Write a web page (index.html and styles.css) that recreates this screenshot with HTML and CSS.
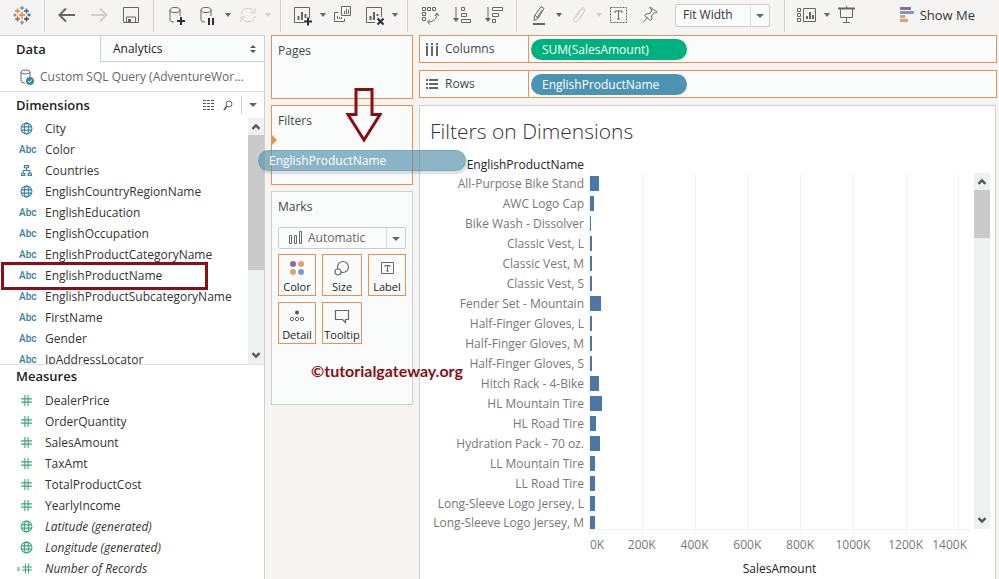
FILE: index.html
```html
<!DOCTYPE html>
<html lang="en">
<head>
    <meta charset="UTF-8">
    <meta name="viewport" content="width=device-width, initial-scale=1.0">
    <title>Filters on Dimensions</title>
    <link rel="stylesheet" href="styles.css">
</head>
<body>
    <!-- shared icons -->
    <svg class="sprite" aria-hidden="true">
        <symbol id="globe" viewBox="0 0 12 12">
            <g fill="none" stroke="currentColor">
                <circle cx="6" cy="6" r="5"/>
                <ellipse cx="6" cy="6" rx="2" ry="5"/>
                <path d="M1.5 4.5h9M1.5 7.5h9"/>
            </g>
        </symbol>
        <symbol id="hierarchy" viewBox="0 0 12 12">
            <path d="M4 1.5h4v2H4zM1.5 8.500h3v2h-3zM7.500 8.500h3v2h-3zM6 3.500v2.500M3 8.500v-2.500h6v2.500" fill="none" stroke="currentColor"/>
        </symbol>
        <symbol id="hash" viewBox="0 0 12 12">
            <path d="M4.500 1v10M7.500 1v10M1 4.500h10M1 7.500h10" fill="none" stroke="currentColor"/>
        </symbol>
        <symbol id="calc-hash" viewBox="0 0 16 12">
            <path d="M8.500 1v10M11.500 1v10M5 4.500h10M5 7.500h10M0 5.500h3M0 7.500h3" fill="none" stroke="currentColor"/>
        </symbol>
        <symbol id="up" viewBox="0 0 8 6">
            <path d="M1 5l3-3 3 3" fill="none" stroke="currentColor" stroke-width="2"/>
        </symbol>
        <symbol id="down" viewBox="0 0 8 6">
            <path d="M1 1l3 3 3-3" fill="none" stroke="currentColor" stroke-width="2"/>
        </symbol>
    </svg>

    <header class="toolbar">
        <div class="group">
            <button class="logo" aria-label="Start page">
                <svg width="20" height="20" viewBox="0 0 20 20" fill="none" stroke-width="1.4">
                    <path d="M10 6.500v7M6.500 10h7" stroke="#e08a3c"/>
                    <path d="M5.500 3.500v5M3 6h5" stroke="#e08a3c"/>
                    <path d="M14.500 3.500v5M12 6h5" stroke="#4a6ca8"/>
                    <path d="M5.500 11.500v5M3 14h5" stroke="#c9582f"/>
                    <path d="M14.500 11.500v5M12 14h5" stroke="#5a3a50"/>
                    <path d="M10 1v4M8 3h4" stroke="#5fa3a0"/>
                    <path d="M10 15.500v4M8 17.500h4" stroke="#7c93b8"/>
                    <path d="M3 8.500v3M1.500 10h3" stroke="#5b93b5"/>
                    <path d="M17 8.500v3M15.500 10h3" stroke="#3d62a8"/>
                </svg>
            </button>
        </div>
        <div class="group">
            <button class="tool" aria-label="Back"><svg viewBox="0 0 20 20"><path d="M18 10H3M9 3.500L2.500 10l6.500 6.500" stroke-width="2"/></svg></button>
            <button class="tool off" aria-label="Forward"><svg viewBox="0 0 20 20"><path d="M2 10h15M11 3.500l6.500 6.500-6.500 6.500" stroke-width="2"/></svg></button>
            <button class="tool" aria-label="Save"><svg viewBox="0 0 20 20"><path d="M2.500 2.500h15v15h-15zM5.500 17v-5h9v5"/><path class="solid" d="M7 14h3v3H7z"/></svg></button>
        </div>
        <div class="group carets">
            <button class="tool" aria-label="New data source"><svg viewBox="0 0 20 20"><ellipse cx="9" cy="5" rx="5" ry="2.500"/><path d="M4 5v10c0 1 1 2 4 2M14 5v6"/><path class="dark" d="M15 12v8M11 16h8"/></svg></button>
            <button class="tool" aria-label="Pause auto updates"><svg viewBox="0 0 20 20"><ellipse cx="8" cy="5" rx="5" ry="2.500"/><path d="M3 5v10c0 1 1 2 4 2M13 5v6"/><path class="dark" d="M11 13v7M15 13v7"/></svg></button>
            <button class="caret" aria-label="Update options"></button>
            <button class="tool off" aria-label="Refresh"><svg viewBox="0 0 20 20"><path d="M3 9a7 7 0 0 1 13-2M17 11a7 7 0 0 1-13 2M17 3v5h-5M3 17v-5h5"/></svg></button>
            <button class="caret off" aria-label="Refresh options"></button>
        </div>
        <div class="group carets">
            <button class="tool" aria-label="New worksheet"><svg viewBox="0 0 20 20"><path d="M11 17.500H1.500v-15h15V13"/><path d="M5.500 15v-4M9 15V7M12.500 13V9" stroke-width="2"/><path class="dark" d="M15 12.500v8M11 16.500h8"/></svg></button>
            <button class="caret" aria-label="Worksheet options"></button>
            <button class="tool" aria-label="Duplicate"><svg viewBox="0 0 20 20"><path d="M8.500 1.500h9v9h-9zM5.500 7.500h-4v9h10v-3M11.500 9V6M13.500 9V3.500M15.500 9V5M4.500 14v-3M6.500 14v-2M8.500 14v-2"/></svg></button>
            <button class="tool" aria-label="Clear sheet"><svg viewBox="0 0 20 20"><path d="M10 17.500H1.500v-15h15V12"/><path d="M5.500 15v-4M9 15V7M12.500 11V9" stroke-width="2"/><path class="dark" d="M12.500 13.500l6 6M18.500 13.500l-6 6"/></svg></button>
            <button class="caret" aria-label="Clear options"></button>
        </div>
        <div class="group">
            <button class="tool" aria-label="Swap rows and columns"><svg viewBox="0 0 20 20"><path d="M2.500 2.500h3v3h-3zM7.500 2.500h3v3h-3zM12.500 2.500h3v3h-3zM2.500 7.500h3v3h-3zM2.500 12.500h3v3h-3zM8 17c6 0 9-4 9-8M15 11l2-3 2 3M10 14.500L7.500 17l2.500 2.500"/></svg></button>
            <button class="tool" aria-label="Sort ascending"><svg viewBox="0 0 20 20"><path d="M4 2v13"/><path class="solid" d="M1 13h6l-3 4z"/><path d="M9.500 2.500h3v3h-3zM9.500 8.500h5v3h-5zM9.500 14.500h9v3h-9z"/></svg></button>
            <button class="tool" aria-label="Sort descending"><svg viewBox="0 0 20 20"><path d="M4 2v13"/><path class="solid" d="M1 13h6l-3 4z"/><path d="M8.500 2.500h10v3h-10zM8.500 8.500h6v3h-6zM8.500 14.500h3v3h-3z"/></svg></button>
        </div>
        <div class="group">
            <button class="tool" aria-label="Highlight"><svg viewBox="0 0 20 20"><path d="M12 1.500l3 2-6 10-4 2 .5-4.500zM6 10.500l3 2M13 5l-5 8"/><path d="M4 19h12" stroke-width="2"/></svg></button>
            <button class="caret" aria-label="Highlight options"></button>
            <button class="tool off" aria-label="Group members"><svg viewBox="0 0 20 20"><path d="M7 12l5-7c2-2 4-.5 3 1.500l-6 9c-2 3-6 1-4-2l6-9c2-3 6-2 4.500 2l-4 6"/></svg></button>
            <button class="caret off" aria-label="Group options"></button>
            <button class="tool" aria-label="Show mark labels"><svg viewBox="0 0 20 20"><path d="M1.500 2.500h16v15h-16z" stroke-dasharray="2 1"/><path d="M6 8V6h7v2M9.500 6v8M8 14h3"/></svg></button>
            <button class="tool" aria-label="Fix axes"><svg viewBox="0 0 20 20"><path d="M9 2l7 5-1.500 1-1-.5-3 3.500.5 3-1.500 1.500-6-5L5 9l3.500-.5L11 5l-2-1.500zM6.500 12.500L2 17.500"/></svg></button>
            <div class="select fit">
                <select aria-label="Fit"><option>Fit Width</option></select>
            </div>
        </div>
        <div class="group last">
            <button class="tool" aria-label="Show cards"><svg viewBox="0 0 20 20"><path d="M.5 3.500h3v3h-3zM.5 8.500h3v3h-3zM.5 13.500h3v3h-3zM6.500 3.500h12v13h-12z"/><path d="M10 14v-3M13 14V7M16 14v-4" stroke-width="2"/></svg></button>
            <button class="caret" aria-label="Card options"></button>
            <button class="tool" aria-label="Presentation mode"><svg viewBox="0 0 20 20"><path d="M1 3.500h17" stroke-width="2"/><path d="M3.500 4v8.500h12V4M9.500 13v4M6 17.500h7M9.500 1v2"/></svg></button>
        </div>
        <button class="show-me">
            <svg width="14" height="15" viewBox="0 0 14 15">
                <path fill="#8d6c9b" d="M0 0h11v3H0z"/>
                <path fill="#8097c9" d="M0 4h14v3H0z"/>
                <path fill="#e3a06a" d="M0 8h5v3H0zM0 12h8v3H0z"/>
            </svg>
            Show Me
        </button>
    </header>

    <main class="workspace">
        <aside class="pane">
            <div class="tabs">
                <button class="tab active">Data</button>
                <button class="tab">Analytics
                    <svg width="6" height="8" viewBox="0 0 6 8"><path fill="#555" d="M3 0l3 3H0zM3 8L0 5h6z"/></svg>
                </button>
            </div>
            <a class="source" href="#">
                <svg width="14" height="16" viewBox="0 0 14 16">
                    <g fill="none" stroke="#666"><ellipse cx="5.500" cy="3" rx="4.500" ry="2"/><path d="M1 3v9c0 1 1 2 4 2M10 3v5"/></g>
                    <circle cx="10" cy="12" r="4" fill="#2f87ab"/><path d="M8 12l1.500 1.500 2.500-3" fill="none" stroke="#fff"/>
                </svg>
                Custom SQL Query (AdventureWor...
            </a>
            <section class="dimensions">
                <div class="pane-head">
                    <h2>Dimensions</h2>
                    <button aria-label="View data"><svg width="12" height="10" viewBox="0 0 12 10"><path d="M0 .5h12M0 3.500h12M0 6.500h12M0 9.500h12" stroke="#555" stroke-dasharray="3 1"/></svg></button>
                    <button aria-label="Find field"><svg width="10" height="11" viewBox="0 0 10 11"><path d="M4 6L1 10" stroke="#666" stroke-width="2"/><circle cx="6" cy="4" r="3" fill="none" stroke="#666"/></svg></button>
                    <button class="menu" aria-label="Dimensions menu"><span class="arrow"></span></button>
                </div>
                <div class="scroll-area">
                    <ul class="fields">
                        <li><svg class="icon"><use href="#globe"/></svg>City</li>
                        <li><span class="abc">Abc</span>Color</li>
                        <li><svg class="icon"><use href="#hierarchy"/></svg>Countries</li>
                        <li><svg class="icon"><use href="#globe"/></svg>EnglishCountryRegionName</li>
                        <li><span class="abc">Abc</span>EnglishEducation</li>
                        <li><span class="abc">Abc</span>EnglishOccupation</li>
                        <li><span class="abc">Abc</span>EnglishProductCategoryName</li>
                        <li class="marked"><span class="abc">Abc</span>EnglishProductName</li>
                        <li><span class="abc">Abc</span>EnglishProductSubcategoryName</li>
                        <li><span class="abc">Abc</span>FirstName</li>
                        <li><span class="abc">Abc</span>Gender</li>
                        <li><span class="abc">Abc</span>IpAddressLocator</li>
                    </ul>
                    <div class="scrollbar">
                        <svg><use href="#up"/></svg>
                        <div class="thumb"></div>
                        <svg><use href="#down"/></svg>
                    </div>
                </div>
            </section>
            <section class="measures">
                <h2>Measures</h2>
                <ul class="fields">
                    <li><svg class="icon"><use href="#hash"/></svg>DealerPrice</li>
                    <li><svg class="icon"><use href="#hash"/></svg>OrderQuantity</li>
                    <li><svg class="icon"><use href="#hash"/></svg>SalesAmount</li>
                    <li><svg class="icon"><use href="#hash"/></svg>TaxAmt</li>
                    <li><svg class="icon"><use href="#hash"/></svg>TotalProductCost</li>
                    <li><svg class="icon"><use href="#hash"/></svg>YearlyIncome</li>
                    <li class="generated"><svg class="icon"><use href="#globe"/></svg>Latitude (generated)</li>
                    <li class="generated"><svg class="icon"><use href="#globe"/></svg>Longitude (generated)</li>
                    <li class="generated"><svg class="icon wide"><use href="#calc-hash"/></svg>Number of Records</li>
                </ul>
            </section>
        </aside>

        <div class="cards">
            <section class="card pages">
                <h3>Pages</h3>
            </section>
            <section class="card filters">
                <h3>Filters</h3>
                <span class="drop-mark"></span>
                <div class="drag-pill">EnglishProductName</div>
                <svg class="arrow-down" width="36" height="56" viewBox="0 0 36 56"><path d="M10 2.500h16v25h8L18 53 2 27.500h8z" fill="none" stroke="#8a0f14" stroke-width="3"/></svg>
            </section>
            <section class="card marks">
                <h3>Marks</h3>
                <div class="select mark-type">
                    <svg width="14" height="13" viewBox="0 0 14 13"><path d="M.5 4.500h2v8h-2zM5.500 4.500h2v8h-2zM10.500.5h2v12h-2z" fill="none" stroke="#666"/></svg>
                    <select aria-label="Mark type"><option>Automatic</option></select>
                </div>
                <div class="mark-buttons">
                    <button>
                        <svg viewBox="0 0 16 16"><circle cx="4" cy="4" r="3" fill="#8d6c9b"/><circle cx="12" cy="4" r="3" fill="#e3a06a"/><circle cx="4" cy="12" r="3" fill="#e3a06a"/><circle cx="12" cy="12" r="3" fill="#7d9bd0"/></svg>
                        Color
                    </button>
                    <button>
                        <svg viewBox="0 0 16 16"><g fill="#fafcfb" stroke="#666" stroke-width="1.200"><circle cx="9" cy="7" r="5.500"/><circle cx="4" cy="12" r="3"/></g></svg>
                        Size
                    </button>
                    <button>
                        <svg viewBox="0 0 16 16"><path d="M2.500 2.500h12v11h-12zM6 7V5.500h5V7M8.500 5.500v5.500M7 11h3" fill="none" stroke="#666"/></svg>
                        Label
                    </button>
                    <button>
                        <svg viewBox="0 0 16 16"><circle cx="8" cy="4.500" r="2" fill="#555"/><g fill="none" stroke="#666"><circle cx="3" cy="11" r="1.700"/><circle cx="8" cy="11" r="1.700"/><circle cx="13" cy="11" r="1.700"/></g></svg>
                        Detail
                    </button>
                    <button>
                        <svg viewBox="0 0 16 16"><path d="M1.500 2.500h13v9h-3v3l-3-3h-7z" fill="none" stroke="#666" stroke-width="1.200"/></svg>
                        Tooltip
                    </button>
                </div>
                <div class="watermark">©tutorialgateway.org</div>
            </section>
        </div>

        <div class="sheet">
            <div class="shelf">
                <div class="shelf-name">
                    <svg width="12" height="13" viewBox="0 0 12 13"><path d="M1 0v2M1 3v10M6 0v2M6 3v10M11 0v2M11 3v10" stroke="#666" stroke-width="2"/></svg>
                    Columns
                </div>
                <button class="pill green">SUM(SalesAmount)</button>
            </div>
            <div class="shelf">
                <div class="shelf-name">
                    <svg width="12" height="13" viewBox="0 0 12 13"><path d="M0 2h2M3 2h9M0 6h2M3 6h9M0 10h2M3 10h9" stroke="#666" stroke-width="2"/></svg>
                    Rows
                </div>
                <button class="pill blue">EnglishProductName</button>
            </div>
            <section class="canvas">
                <h1>Filters on Dimensions</h1>
                <div class="chart">
                    <div class="field-name">EnglishProductName</div>
                    <div class="grid-lines"><i></i><i></i><i></i><i></i><i></i><i></i><i></i><i></i></div>
                    <div class="rows">
                        <div class="row"><span>All-Purpose Bike Stand</span><div class="track"><div class="bar" style="--sales: 34"></div></div></div>
                        <div class="row"><span>AWC Logo Cap</span><div class="track"><div class="bar" style="--sales: 16"></div></div></div>
                        <div class="row"><span>Bike Wash - Dissolver</span><div class="track"><div class="bar" style="--sales: 4"></div></div></div>
                        <div class="row"><span>Classic Vest, L</span><div class="track"><div class="bar" style="--sales: 8"></div></div></div>
                        <div class="row"><span>Classic Vest, M</span><div class="track"><div class="bar" style="--sales: 8"></div></div></div>
                        <div class="row"><span>Classic Vest, S</span><div class="track"><div class="bar" style="--sales: 8"></div></div></div>
                        <div class="row"><span>Fender Set - Mountain</span><div class="track"><div class="bar" style="--sales: 42"></div></div></div>
                        <div class="row"><span>Half-Finger Gloves, L</span><div class="track"><div class="bar" style="--sales: 8"></div></div></div>
                        <div class="row"><span>Half-Finger Gloves, M</span><div class="track"><div class="bar" style="--sales: 8"></div></div></div>
                        <div class="row"><span>Half-Finger Gloves, S</span><div class="track"><div class="bar" style="--sales: 8"></div></div></div>
                        <div class="row"><span>Hitch Rack - 4-Bike</span><div class="track"><div class="bar" style="--sales: 35"></div></div></div>
                        <div class="row"><span>HL Mountain Tire</span><div class="track"><div class="bar" style="--sales: 46"></div></div></div>
                        <div class="row"><span>HL Road Tire</span><div class="track"><div class="bar" style="--sales: 23"></div></div></div>
                        <div class="row"><span>Hydration Pack - 70 oz.</span><div class="track"><div class="bar" style="--sales: 38"></div></div></div>
                        <div class="row"><span>LL Mountain Tire</span><div class="track"><div class="bar" style="--sales: 19"></div></div></div>
                        <div class="row"><span>LL Road Tire</span><div class="track"><div class="bar" style="--sales: 19"></div></div></div>
                        <div class="row"><span>Long-Sleeve Logo Jersey, L</span><div class="track"><div class="bar" style="--sales: 19"></div></div></div>
                        <div class="row"><span>Long-Sleeve Logo Jersey, M</span><div class="track"><div class="bar" style="--sales: 19"></div></div></div>
                    </div>
                    <div class="scrollbar">
                        <svg><use href="#up"/></svg>
                        <div class="thumb"></div>
                        <svg><use href="#down"/></svg>
                    </div>
                    <div class="axis">
                        <span>0K</span><span>200K</span><span>400K</span><span>600K</span><span>800K</span><span>1000K</span><span>1200K</span><span>1400K</span>
                    </div>
                    <div class="axis-title">SalesAmount</div>
                </div>
            </section>
        </div>
    </main>
</body>
</html>
```
FILE: styles.css
```css
*, *::before, *::after { box-sizing: border-box; }
body {
    margin: 0;
    height: 100vh;
    display: flex;
    flex-direction: column;
    overflow: hidden;
    background: #f5f4f3;
    color: #333;
    font: 12px/20px "Open Sans", "Noto Sans", sans-serif;
}
h1, h2, h3, ul { margin: 0; padding: 0; }
button { padding: 0; border: none; background: none; font: inherit; color: inherit; }
svg { flex: none; }
.sprite { position: absolute; width: 0; height: 0; }

/* toolbar */
.toolbar { display: flex; align-items: flex-start; flex: none; height: 35px; }
.group { display: flex; align-items: center; height: 32px; padding: 0 12px 2px; border-right: 1px solid #d0d0d0; }
.group.carets { padding-right: 2px; }
.group.last { border: none; }
.logo { display: flex; width: 20px; }
.tool { width: 20px; height: 20px; }
.tool + .tool { margin-left: 12px; }
.tool svg { display: block; width: 20px; height: 20px; fill: none; stroke: #666; overflow: visible; }
.tool .solid { fill: #666; stroke: none; }
.tool .dark { stroke: #2b2b42; stroke-width: 2; }
.off { opacity: 0.25; }
.caret { width: 8px; height: 20px; margin: 0 6px; }
.caret::after, .arrow, .select::after {
    content: "";
    display: block;
    width: 0;
    border: 4px solid transparent;
    border-top-color: #666;
    border-bottom: none;
}
.caret::after { margin: 0 1px; border-width: 4px 3px 0; }
.show-me { display: flex; align-items: center; gap: 6px; height: 29px; margin: 0 24px 0 auto; font-size: 13px; color: #333; }

.select { position: relative; background: #fafcfb; border: 1px solid #ccc; border-radius: 2px; }
.select select {
    display: block;
    width: 100%;
    height: 100%;
    padding: 0 0 0 7px;
    border: none;
    background: none;
    appearance: none;
    font: inherit;
    color: inherit;
}
.select::before { content: ""; position: absolute; right: 18px; top: 0; bottom: 0; border-left: 1px solid #ddd; }
.select::after { position: absolute; right: 5px; top: 9px; }
.fit { width: 95px; height: 23px; margin: 0 2px 0 14px; }

/* layout */
.workspace { flex: 1; min-height: 0; display: grid; grid-template: minmax(0, 1fr) / 265px 142px 1fr; gap: 6px; padding-right: 2px; }

/* data pane */
.pane { display: flex; flex-direction: column; min-height: 0; background: #fff; border: 1px solid #d0d0d0; border-width: 1px 1px 0 0; }
.tabs { display: flex; flex: none; height: 26px; }
.tab { display: flex; justify-content: space-between; align-items: center; flex: 1; padding: 0 8px 0 12px; background: #fafcfb; border: 1px solid #d0d0d0; border-width: 0 0 1px 1px; color: #222; }
.tab.active { flex: none; width: 100px; padding-left: 16px; border: none; background: #fff; font-size: 13px; font-weight: 600; }
.source { display: flex; align-items: center; flex: none; gap: 6px; height: 30px; padding-left: 20px; border-bottom: 1px solid #e0e0e0; color: #666; text-decoration: none; white-space: nowrap; }
.pane h2 { font-size: 13px; font-weight: 600; color: #222; }
.dimensions { flex: 1; min-height: 0; display: flex; flex-direction: column; border-bottom: 1px solid #e0e0e0; }
.pane-head { display: flex; align-items: center; flex: none; gap: 8px; height: 26px; padding-left: 16px; }
.pane-head h2 { flex: 1; }
.pane-head button { display: flex; align-items: center; height: 18px; }
.pane-head .menu { padding: 0 7px; border-left: 1px solid #ccc; }
.scroll-area { flex: 1; min-height: 0; display: flex; overflow: hidden; }
.fields { flex: 1; list-style: none; }
.fields li { position: relative; display: flex; align-items: center; height: 21px; padding-left: 20px; color: #333; white-space: nowrap; }
.icon { width: 13px; height: 13px; margin-right: 12px; color: #35809f; }
.icon.wide { width: 16px; margin-left: -3px; }
.abc { flex: none; width: 25px; margin-left: -1px; margin-right: 1px; font: 500 10px/20px Roboto, sans-serif; color: #35809f; }
.measures { flex: none; }
.measures h2 { height: 25px; padding-left: 16px; line-height: 22px; }
.measures .icon { color: #3aa583; }
.generated { font-style: italic; }
.marked::after { content: ""; position: absolute; left: 1px; top: -3px; width: 207px; height: 28px; border: 3px solid #8a0f14; }

.scrollbar { display: flex; flex-direction: column; align-items: center; width: 16px; background: #eff0f0; color: #555; }
.scrollbar svg { width: 10px; height: 7px; margin: 5px 0; }
.scrollbar .thumb { width: 100%; height: 135px; margin-bottom: auto; background: #cacaca; }

/* cards */
.cards { display: flex; flex-direction: column; gap: 6px; min-height: 0; }
.card { position: relative; flex: none; padding: 5px 6px; background: #fafcfb; border: 1px solid #eb9150; }
.card h3 { font-size: 12px; font-weight: normal; color: #444; }
.pages { height: 64px; }
.filters { height: 80px; z-index: 2; }
.marks { height: 214px; border-color: #d0d0d0; }
.drop-mark { position: absolute; left: 0; top: 29px; border: 5px solid transparent; border-left-color: #eb9150; border-right: none; }
.drag-pill {
    position: absolute;
    left: -14px;
    top: 44px;
    width: 208px;
    height: 21px;
    padding-left: 10px;
    border: 1px solid rgba(80, 150, 175, 0.4);
    border-radius: 11px;
    background: rgba(85, 148, 174, 0.68);
    box-shadow: 2px 3px 1px rgba(0, 0, 0, 0.12);
    color: #fff;
    line-height: 19px;
}
.arrow-down { position: absolute; left: 74px; top: -19px; }
.mark-type { height: 22px; margin: 10px 0 5px; color: #666; }
.mark-type svg { position: absolute; left: 10px; top: 3px; }
.mark-type select { padding-left: 29px; }
.mark-buttons { display: grid; grid-template-columns: 38px 40px 38px; gap: 6px; }
.mark-buttons button { display: flex; flex-direction: column; align-items: center; height: 42px; padding-top: 5px; border: 1px solid #eb9150; font-size: 11px; line-height: 22px; color: #222; }
.mark-buttons svg { width: 16px; height: 16px; }
.watermark { position: absolute; left: 39px; top: 168px; z-index: 2; font: bold 16px/22px Lato, sans-serif; color: #8a0f14; }

/* sheet */
.sheet { display: flex; flex-direction: column; gap: 7px; min-width: 0; min-height: 0; }
.shelf { display: flex; align-items: center; flex: none; height: 28px; background: #fafcfb; border: 1px solid #eb9150; }
.shelf-name { display: flex; align-items: center; gap: 7px; width: 109px; height: 100%; padding-left: 6px; border-right: 1px solid #eb9150; color: #444; }
.pill { width: 156px; height: 21px; margin-left: 2px; padding-left: 11px; border-radius: 11px; color: #fff; text-align: left; line-height: 22px; }
.pill.green { background: #00b180; }
.pill.blue { background: #4b94b4; }
.canvas { flex: 1; min-height: 0; margin-right: 1px; padding: 10px 5px 0 0; background: #fff; border: 1px solid #d0d0d0; border-bottom: none; }
.canvas h1 { padding-left: 10px; font-size: 21px; line-height: 30px; font-weight: 300; color: #333; }

.chart { display: grid; grid-template-columns: 169px 1fr 4px 16px; margin-top: 8px; }
.field-name { grid-area: 1 / 1; height: 19px; padding-right: 5px; text-align: right; font-weight: 500; line-height: 22px; color: #222; white-space: nowrap; }
.grid-lines { grid-area: 2 / 2; display: grid; grid-template-columns: repeat(7, 200fr) 44fr; margin-bottom: -5px; }
.grid-lines i { border-left: 1px solid #eff2f1; }
.rows { grid-area: 2 / 1 / 3 / 3; }
.row { display: grid; grid-template-columns: 169px 1fr; height: 20px; }
.row span { padding-right: 5px; text-align: right; line-height: 22px; color: #777; white-space: nowrap; }
.track { padding: 3px 0 0 1px; }
.bar { width: calc(var(--sales) / 1444 * 100%); height: 15px; background: #4c78a8; }
/* the last row is cut by the axis */
.row:last-child { height: 16px; }
.row:last-child span { line-height: 20px; }
.row:last-child .bar { height: 13px; }
.chart .scrollbar { grid-area: 2 / 4; }
.chart .thumb { height: 48px; }
.axis { grid-area: 3 / 2; display: grid; grid-template-columns: 100fr repeat(6, 200fr) 144fr; padding-top: 5px; border-top: 1px solid #eff2f1; text-align: center; color: #777; }
.axis span { display: flex; justify-content: center; }
.axis span:first-child { justify-content: flex-start; padding-left: 1px; }
.axis span:last-child { justify-content: flex-end; padding-right: 3px; }
.axis-title { grid-area: 4 / 2; padding-top: 4px; text-align: center; color: #222; }
```
